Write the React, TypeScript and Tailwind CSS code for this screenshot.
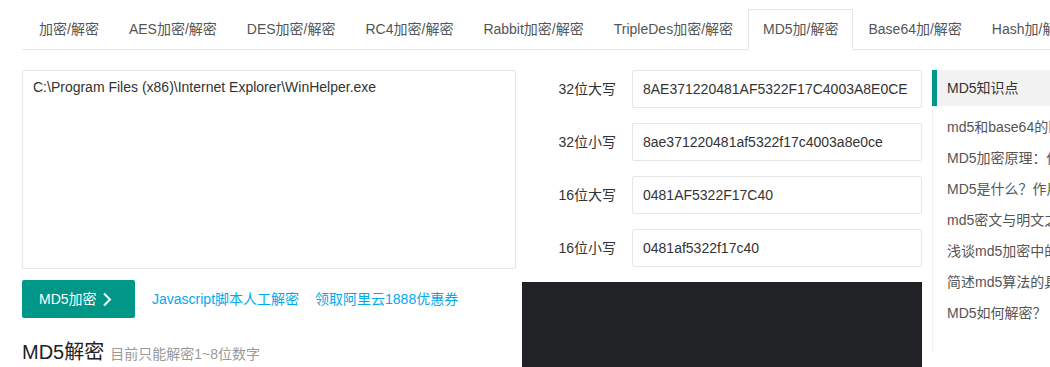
const tabs = [
  '加密/解密',
  'AES加密/解密',
  'DES加密/解密',
  'RC4加密/解密',
  'Rabbit加密/解密',
  'TripleDes加密/解密',
  'MD5加/解密',
  'Base64加/解密',
  'Hash加/解密',
  'URL加/解密',
];

const results = [
  { label: '32位大写', value: '8AE371220481AF5322F17C4003A8E0CE' },
  { label: '32位小写', value: '8ae371220481af5322f17c4003a8e0ce' },
  { label: '16位大写', value: '0481AF5322F17C40' },
  { label: '16位小写', value: '0481af5322f17c40' },
];

const articles = [
  'md5和base64的区别是什么',
  'MD5加密原理：你真的了解吗',
  'MD5是什么？作用有哪些',
  'md5密文与明文之间的关系',
  '浅谈md5加密中的安全问题',
  '简述md5算法的具体步骤',
  'MD5如何解密？',
];

export default function App() {
  return (
    <div className="w-full h-[367px] overflow-hidden bg-white font-['Liberation_Sans','Noto_Sans_CJK_SC',sans-serif] text-sm text-[#333]">
      <div className="pl-[22px] pt-[9px]">
        {/* tab bar */}
        <ul className="flex w-[1300px] border-b border-[#e6e6e6] pl-[2px]">
          {tabs.map((t) => {
            const active = t === 'MD5加/解密';
            return (
              <li
                key={t}
                className={
                  active
                    ? 'h-[41px] -mb-px shrink-0 whitespace-nowrap border border-[#e6e6e6] border-b-white bg-white px-[14px] leading-[39px] text-[#555]'
                    : 'h-[41px] -mb-px shrink-0 whitespace-nowrap border border-transparent px-[14px] leading-[39px] text-[#555]'
                }
              >
                {t}
              </li>
            );
          })}
        </ul>

        <div className="mt-5 flex w-[1300px] items-start">
          {/* input + actions */}
          <div className="w-[494px] shrink-0">
            <textarea
              readOnly
              defaultValue={'C:\\Program Files (x86)\\Internet Explorer\\WinHelper.exe'}
              className="block h-[199px] w-full resize-none rounded-[2px] border border-[#e6e6e6] px-[10px] pt-[6px] leading-5 text-[#333] outline-none"
            />
            <div className="mt-[11px] flex items-center">
              <button className="flex h-[38px] w-[113px] items-center rounded-[2px] bg-[#009688] pl-[17px] text-white">
                MD5加密
                <svg className="ml-[5px]" width="10" height="15" viewBox="0 0 10 15" fill="none">
                  <path d="M2 1.5 L8 7.5 L2 13.5" stroke="white" strokeWidth="2" />
                </svg>
              </button>
              <a className="ml-[17px] text-[#01AAED]">Javascript脚本人工解密</a>
              <a className="ml-4 text-[#01AAED]">领取阿里云1888优惠券</a>
            </div>
            <div className="mt-5 flex items-baseline leading-[28px]">
              <h2 className="text-[20px] text-[#222]">MD5解密</h2>
              <span className="ml-[6px] text-[#999]">目前只能解密1~8位数字</span>
            </div>
          </div>

          {/* results */}
          <div className="ml-[6px] w-[400px] shrink-0">
            <div className="flex flex-col gap-[15px]">
              {results.map((r) => (
                <div key={r.label} className="flex items-center">
                  <label className="w-[110px] shrink-0 pr-4 text-right text-[#333]">{r.label}</label>
                  <input
                    readOnly
                    defaultValue={r.value}
                    className="h-[38px] w-[290px] rounded-[2px] border border-[#e6e6e6] px-[10px] text-[#333] outline-none"
                  />
                </div>
              ))}
            </div>
            <div className="mt-[15px] h-[120px] bg-[#212226]" />
          </div>

          {/* sidebar */}
          <div className="ml-[10px] w-[260px] shrink-0 border-l border-[#f0f0f0] pb-6">
            <div className="-ml-px flex h-9 items-center border-l-[5px] border-[#009688] bg-[#f2f2f2] pl-[10px] text-[#333]">
              MD5知识点
            </div>
            <ul className="pl-[14px] pt-[6px]">
              {articles.map((a) => (
                <li key={a} className="whitespace-nowrap leading-[31px] text-[#555]">
                  {a}
                </li>
              ))}
            </ul>
          </div>
        </div>
      </div>
    </div>
  );
}
